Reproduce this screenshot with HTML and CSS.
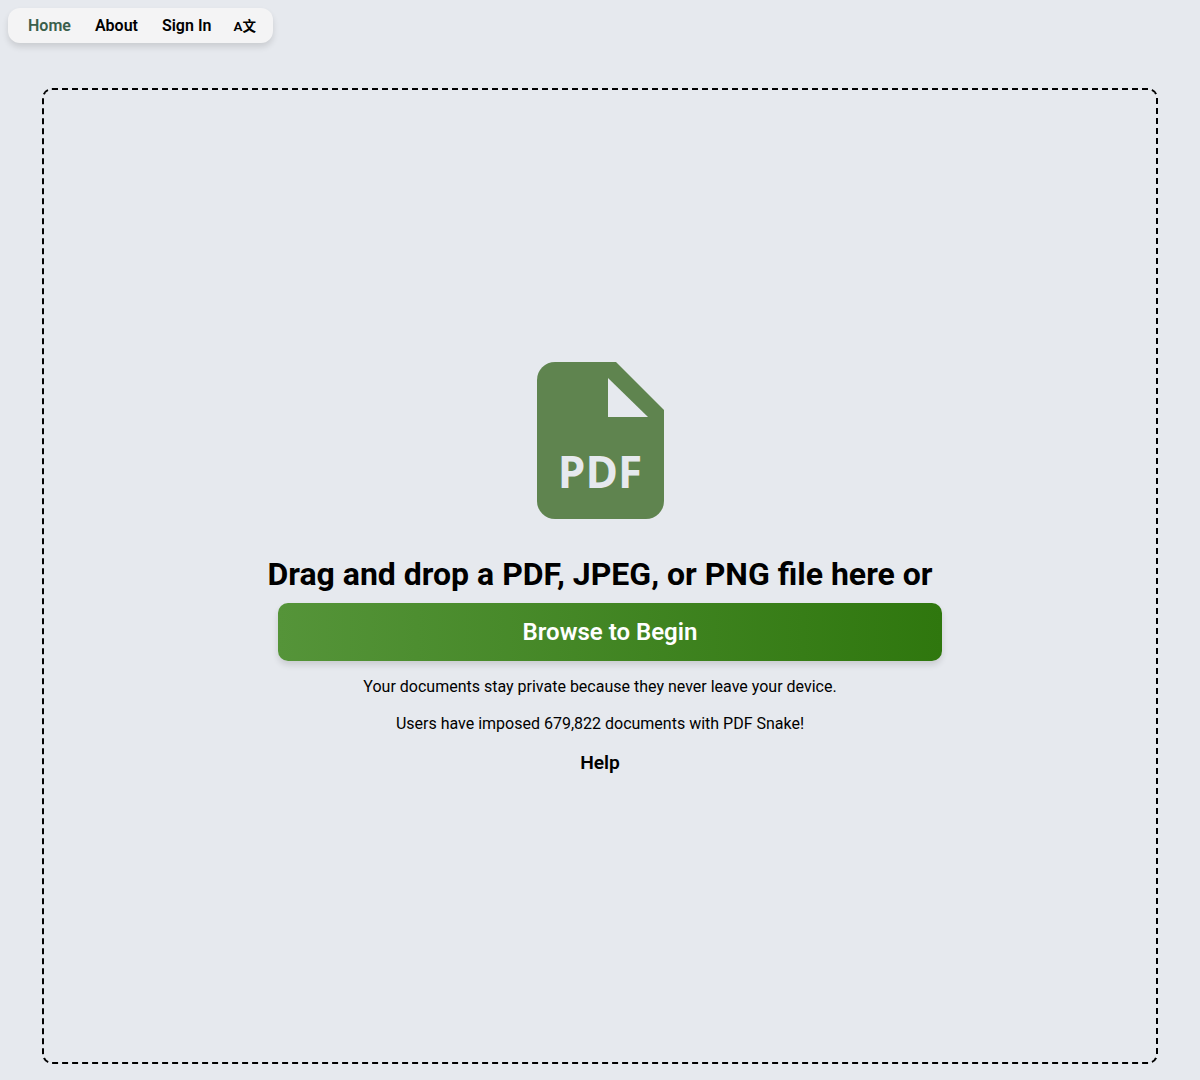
FILE: index.html
```html
<!DOCTYPE html>
<html>
  <head>
    <title>PDF Snake</title>
    <link rel="stylesheet" href="styles.css">
  </head>
  <body>
    <nav class="navBar">
      <a class="navLink active">Home</a>
      <a class="navLink">About</a>
      <a class="navLink">Sign In</a>
      <a class="navLink langLink">A文</a>
    </nav>

    <main class="dropZone">
      <svg class="pdfIcon" viewBox="0 0 127 157" width="127" height="157">
        <path class="pdfBody" d="M18 0H79L127 48V139A18 18 0 0 1 109 157H18A18 18 0 0 1 0 139V18A18 18 0 0 1 18 0Z"/>
        <path class="pdfFold" d="M71 16V55H111Z"/>
        <text class="pdfLabel" x="63" y="126" text-anchor="middle">PDF</text>
      </svg>
      <h1 class="dropTitle">Drag and drop a PDF, JPEG, or PNG file here or</h1>
      <button class="browseButton">Browse to Begin</button>
      <p class="dropNote">Your documents stay private because they never leave your device.</p>
      <p class="dropNote">Users have imposed 679,822 documents with PDF Snake!</p>
      <a class="helpLink">Help</a>
    </main>
  </body>
</html>
```

FILE: styles.css
```css
html, body {
  margin: 0;
  height: 100%;
}

body {
  background-color: #e6e9ee;
  color: #000000;
  font-family: Roboto, "Liberation Sans", sans-serif;
  padding: 8px 42px 16px;
  box-sizing: border-box;
  display: flex;
  flex-direction: column;
}

.navBar {
  display: flex;
  align-items: center;
  align-self: flex-start;
  margin-left: -34px;
  height: 35px;
  padding: 0 17px 0 20px;
  gap: 24px;
  background-color: #f4f4f5;
  border-radius: 12px;
  box-shadow: 0 4px 6px rgba(0,0,0,0.12);
}

.navLink {
  font-size: 16px;
  font-weight: 600;
}

.navLink.active {
  color: #3b5f4c;
}

.langLink {
  font-size: 13.5px;
  margin-left: -2px;
  margin-bottom: 2px;
  font-family: Roboto, "Noto Sans CJK SC", sans-serif;
}

.dropZone {
  flex: 1;
  margin-top: 45px;
  padding-bottom: 16px;
  border: 2px dashed #000000;
  border-radius: 10px;
  display: flex;
  flex-direction: column;
  align-items: center;
  justify-content: center;
}

.pdfIcon {
  display: block;
  margin-bottom: 32px;
}

.pdfBody {
  fill: #5f844f;
}

.pdfFold {
  fill: #e6e9ee;
}

.pdfLabel {
  fill: #e6e9ee;
  font-family: "Open Sans", sans-serif;
  font-size: 44px;
  font-weight: 700;
}

.dropTitle {
  font-size: 32px;
  line-height: 46px;
  font-weight: 700;
  margin: 0 0 6px;
}

.browseButton {
  width: 664px;
  height: 58px;
  margin-left: 20px;
  border: 0;
  border-radius: 10px;
  background: linear-gradient(90deg, #559439, #2f770e);
  color: #ffffff;
  font-family: inherit;
  font-size: 24px;
  font-weight: 600;
  box-shadow: 0 4px 6px rgba(0,0,0,0.12);
}

.dropNote {
  font-size: 16px;
  line-height: 19px;
  margin: 16px 0 0;
}

.dropNote + .dropNote {
  margin-top: 18px;
}

.helpLink {
  font-size: 19.2px;
  font-weight: 600;
  line-height: 23px;
  margin-top: 18px;
}
```
